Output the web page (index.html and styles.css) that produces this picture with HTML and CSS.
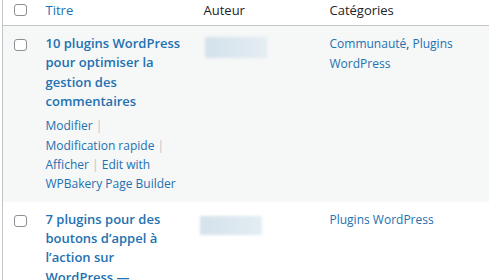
FILE: index.html
```html
<!DOCTYPE html>
<html lang="fr">
<head>
    <meta charset="UTF-8">
    <meta name="viewport" content="width=device-width, initial-scale=1.0">
    <title>Articles</title>
    <link rel="stylesheet" href="styles.css">
</head>
<body>

    <table class="posts">
        <colgroup>
            <col class="w-check">
            <col class="w-title">
            <col class="w-author">
            <col class="w-cats">
        </colgroup>
        <thead>
            <tr>
                <th class="check"><input type="checkbox" class="box"></th>
                <th><a href="#">Titre</a></th>
                <th>Auteur</th>
                <th>Catégories</th>
            </tr>
        </thead>
        <tbody>
            <tr class="alt">
                <th class="check"><input type="checkbox" class="box"></th>
                <td>
                    <a href="#" class="row-title">10 plugins WordPress pour optimiser la gestion des commentaires</a>
                    <div class="row-actions">
                        <span><a href="#">Modifier</a> <i>|</i> </span>
                        <span><button type="button" class="button-link">Modification rapide</button> <i>|</i> </span>
                        <span><a href="#">Afficher</a> <i>|</i> </span>
                        <span><a href="#">Edit with WPBakery Page Builder</a></span>
                    </div>
                </td>
                <td><div class="blurred"></div></td>
                <td><a href="#">Communauté</a>, <a href="#">Plugins WordPress</a></td>
            </tr>
            <tr>
                <th class="check"><input type="checkbox" class="box"></th>
                <td>
                    <a href="#" class="row-title">7 plugins pour des boutons d’appel à l’action sur WordPress —</a>
                </td>
                <td><div class="blurred second"></div></td>
                <td><a href="#">Plugins WordPress</a></td>
            </tr>
        </tbody>
    </table>

</body>
</html>
```

FILE: styles.css
```css
body {
    font-family: 'Open Sans', sans-serif;
    font-size: 12px;
    color: #3c434a;
    background-color: #ffffff;
    margin: 0;
    padding: 0 0 0 2px;
    overflow: hidden;
}

a {
    color: #2271b1;
    text-decoration: none;
}

.posts {
    border-collapse: collapse;
    table-layout: fixed;
    width: 498px;
    border-left: 1px solid #c3c4c7;
}

.w-check { width: 33px; }
.w-title { width: 158px; }
.w-author { width: 126px; }
.w-cats { width: 181px; }

.posts th,
.posts td {
    text-align: left;
    vertical-align: top;
    padding: 8px 10px;
    line-height: 19.5px;
    font-weight: 400;
}

.posts thead th {
    font-size: 13px;
    color: #1d2327;
    padding: 0 10px 5px;
    line-height: 20px;
    border-bottom: 1px solid #c3c4c7;
}

.posts th.check {
    padding: 13px 0 0 11px;
}

.posts thead th.check {
    padding: 4px 0 0 11px;
}

.box {
    appearance: none;
    display: block;
    margin: 0;
    width: 13px;
    height: 12px;
    border: 1px solid #8c8f94;
    border-radius: 3px;
    background-color: #ffffff;
}

.alt {
    background-color: #f6f7f7;
}

.row-title {
    display: block;
    font-size: 13px;
    font-weight: 600;
    line-height: 19.3px;
}

.row-actions {
    padding-top: 5px;
    line-height: 19.4px;
}

.row-actions i {
    font-style: normal;
    color: #c3c4c7;
}

.button-link {
    display: inline-block;
    margin: 0;
    padding: 0;
    border: none;
    background: none;
    font: inherit;
    line-height: inherit;
    color: #2271b1;
    cursor: pointer;
}

.blurred {
    width: 62px;
    height: 21px;
    margin-top: 3px;
    margin-left: 1px;
    background: linear-gradient(90deg, #d4e2eb, #dde8ef 60%, #e4edf2);
    filter: blur(1.5px);
}

.blurred.second {
    margin-top: 6px;
    margin-left: -4px;
    height: 19px;
}
```
